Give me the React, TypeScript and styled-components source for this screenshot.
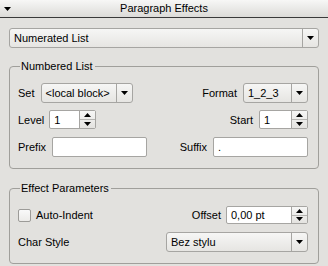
import React from "react";
import styled, { createGlobalStyle } from "styled-components";

const GlobalStyle = createGlobalStyle`
  html, body { margin: 0; padding: 0; }
  body {
    background: #e2e1de;
    font-family: "Liberation Sans", Arial, sans-serif;
    font-size: 11px;
    color: #000;
    width: 328px;
    height: 266px;
    overflow: hidden;
  }
`;

const TitleBar = styled.div`
  height: 17px;
  border-bottom: 1px solid #3a3a3a;
  background: linear-gradient(#f7f7f6, #dcdbd8);
  display: grid;
  grid-template-columns: 20px 1fr 20px;
  align-items: center;
`;

const TitleText = styled.div`
  text-align: center;
  font-size: 11px;
  line-height: 17px;
`;

const Collapse = styled.div`
  display: flex;
  justify-content: center;
  padding-right: 6px;
`;

const Content = styled.div`
  padding: 10px 9px 0 9px;
`;

const Combo = styled.div<{ $w?: number }>`
  box-sizing: border-box;
  width: ${(p) => (p.$w ? `${p.$w}px` : "100%")};
  height: 20px;
  display: flex;
  border: 1px solid #a6a5a2;
  border-radius: 3px;
  background: linear-gradient(#f6f6f5, #e6e5e2);
`;

const ComboText = styled.div`
  flex: 1;
  padding-left: 4px;
  line-height: 18px;
  white-space: nowrap;
  overflow: hidden;
`;

const ComboArrow = styled.div`
  width: 15px;
  border-left: 1px solid #a6a5a2;
  display: flex;
  align-items: center;
  justify-content: center;
`;

const Group = styled.fieldset<{ $top: number }>`
  margin: ${(p) => p.$top}px 0 0 0;
  padding: 10px 10px 11px 8px;
  border: 1px solid #a09f9b;
  border-radius: 4px;
  min-width: 0;
`;

const Legend = styled.legend`
  padding: 0 2px 0 1px;
  margin-left: 2px;
  font-size: 11px;
  line-height: 13px;
`;

const Row = styled.div<{ $mt?: number }>`
  display: flex;
  justify-content: space-between;
  align-items: center;
  margin-top: ${(p) => p.$mt ?? 0}px;
`;

const Pair = styled.div<{ $gap?: number }>`
  display: flex;
  align-items: center;
  gap: ${(p) => p.$gap ?? 6}px;
`;

const Label = styled.span`
  white-space: nowrap;
`;

const Field = styled.div<{ $w: number }>`
  box-sizing: border-box;
  width: ${(p) => p.$w}px;
  height: 20px;
  border: 1px solid #a6a5a2;
  border-radius: 2px;
  background: #fff;
  padding-left: 4px;
  line-height: 18px;
`;

const Spin = styled.div<{ $w: number; $h: number }>`
  box-sizing: border-box;
  width: ${(p) => p.$w}px;
  height: ${(p) => p.$h}px;
  display: flex;
  border: 1px solid #a6a5a2;
  border-radius: 2px;
  background: #fff;
`;

const SpinText = styled.div`
  flex: 1;
  padding-left: 4px;
  display: flex;
  align-items: center;
`;

const SpinButtons = styled.div`
  width: 15px;
  border-left: 1px solid #a6a5a2;
  display: flex;
  flex-direction: column;
  background: linear-gradient(#f6f6f5, #e4e3e0);
`;

const SpinHalf = styled.div<{ $sep?: boolean }>`
  flex: 1;
  display: flex;
  align-items: center;
  justify-content: center;
  border-top: ${(p) => (p.$sep ? "1px solid #b5b4b1" : "none")};
`;

const Check = styled.div`
  box-sizing: border-box;
  width: 13px;
  height: 13px;
  border: 1px solid #9c9b98;
  border-radius: 2px;
  background: linear-gradient(#f9f9f9, #ecebe9);
`;

const Down = () => (
  <svg width="7" height="4" viewBox="0 0 7 4">
    <path d="M0 0H7L3.5 4Z" fill="#000" />
  </svg>
);

const Up = () => (
  <svg width="7" height="4" viewBox="0 0 7 4">
    <path d="M0 4H7L3.5 0Z" fill="#000" />
  </svg>
);

const ComboBox = ({ text, w }: { text: string; w?: number }) => (
  <Combo $w={w}>
    <ComboText>{text}</ComboText>
    <ComboArrow>
      <Down />
    </ComboArrow>
  </Combo>
);

const SpinBox = ({ text, w, h }: { text: string; w: number; h: number }) => (
  <Spin $w={w} $h={h}>
    <SpinText>{text}</SpinText>
    <SpinButtons>
      <SpinHalf>
        <Up />
      </SpinHalf>
      <SpinHalf $sep>
        <Down />
      </SpinHalf>
    </SpinButtons>
  </Spin>
);

export default function App() {
  return (
    <>
      <GlobalStyle />
      <TitleBar>
        <Collapse>
          <Down />
        </Collapse>
        <TitleText>Paragraph Effects</TitleText>
        <div />
      </TitleBar>
      <Content>
        <ComboBox text="Numerated List" />
        <Group $top={12}>
          <Legend>Numbered List</Legend>
          <Row>
            <Pair>
              <Label>Set</Label>
              <ComboBox text="<local block>" w={92} />
            </Pair>
            <Pair>
              <Label>Format</Label>
              <ComboBox text="1_2_3" w={65} />
            </Pair>
          </Row>
          <Row $mt={7}>
            <Pair $gap={5}>
              <Label>Level</Label>
              <SpinBox text="1" w={47} h={19} />
            </Pair>
            <Pair>
              <Label>Start</Label>
              <SpinBox text="1" w={49} h={19} />
            </Pair>
          </Row>
          <Row $mt={8}>
            <Pair>
              <Label>Prefix</Label>
              <Field $w={95} />
            </Pair>
            <Pair>
              <Label>Suffix</Label>
              <Field $w={95}>.</Field>
            </Pair>
          </Row>
        </Group>
        <Group $top={13}>
          <Legend>Effect Parameters</Legend>
          <Row $mt={1}>
            <Pair $gap={5}>
              <Check />
              <Label>Auto-Indent</Label>
            </Pair>
            <Pair $gap={5}>
              <Label>Offset</Label>
              <SpinBox text="0,00 pt" w={82} h={18} />
            </Pair>
          </Row>
          <Row $mt={8}>
            <Label>Char Style</Label>
            <ComboBox text="Bez stylu" w={142} />
          </Row>
        </Group>
      </Content>
    </>
  );
}
